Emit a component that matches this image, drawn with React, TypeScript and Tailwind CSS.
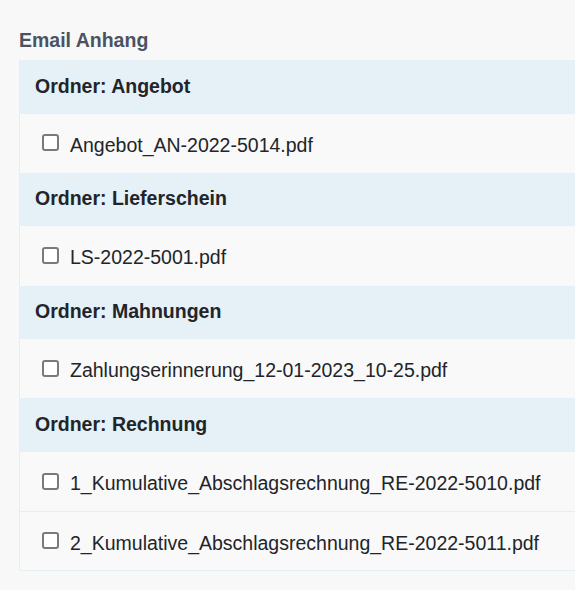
type Folder = {
  name: string;
  files: string[];
};

const folders: Folder[] = [
  { name: 'Angebot', files: ['Angebot_AN-2022-5014.pdf'] },
  { name: 'Lieferschein', files: ['LS-2022-5001.pdf'] },
  { name: 'Mahnungen', files: ['Zahlungserinnerung_12-01-2023_10-25.pdf'] },
  {
    name: 'Rechnung',
    files: [
      '1_Kumulative_Abschlagsrechnung_RE-2022-5010.pdf',
      '2_Kumulative_Abschlagsrechnung_RE-2022-5011.pdf',
    ],
  },
];

function FileRow({ file }: { file: string }) {
  return (
    <label className="flex h-[59.2px] items-center border-t border-[#e3eef5] bg-[#f9f9f9] pl-[22px] first:border-t-0">
      <input
        type="checkbox"
        className="-mt-[1px] h-[17px] w-[17px] shrink-0 appearance-none rounded-[3px] border-2 border-[#7a7a7a] bg-white"
      />
      <span className="ml-[11px] mt-[4px] whitespace-nowrap text-[19.5px] text-[#212529]">{file}</span>
    </label>
  );
}

export default function App() {
  return (
    <div
      className="min-h-[590px] w-full overflow-hidden bg-[#f8f8f8] pt-[29px]"
      style={{ fontFamily: '"Liberation Sans", Arial, sans-serif' }}
    >
      <h2 className="ml-[19px] text-[19.5px] font-bold leading-[23px] text-[#4a5361]">Email Anhang</h2>

      <div className="ml-[19px] mt-[8px] w-[640px] border-b border-l border-[#e3eef5]">
        {folders.map((folder) => (
          <div key={folder.name}>
            <div className="flex h-[53.6px] items-center bg-[#e5f0f7] pl-[15px]">
              <span className="-mt-[1px] text-[19.5px] font-bold text-[#212529]">Ordner: {folder.name}</span>
            </div>
            <div>
              {folder.files.map((file) => (
                <FileRow key={file} file={file} />
              ))}
            </div>
          </div>
        ))}
      </div>
    </div>
  );
}
